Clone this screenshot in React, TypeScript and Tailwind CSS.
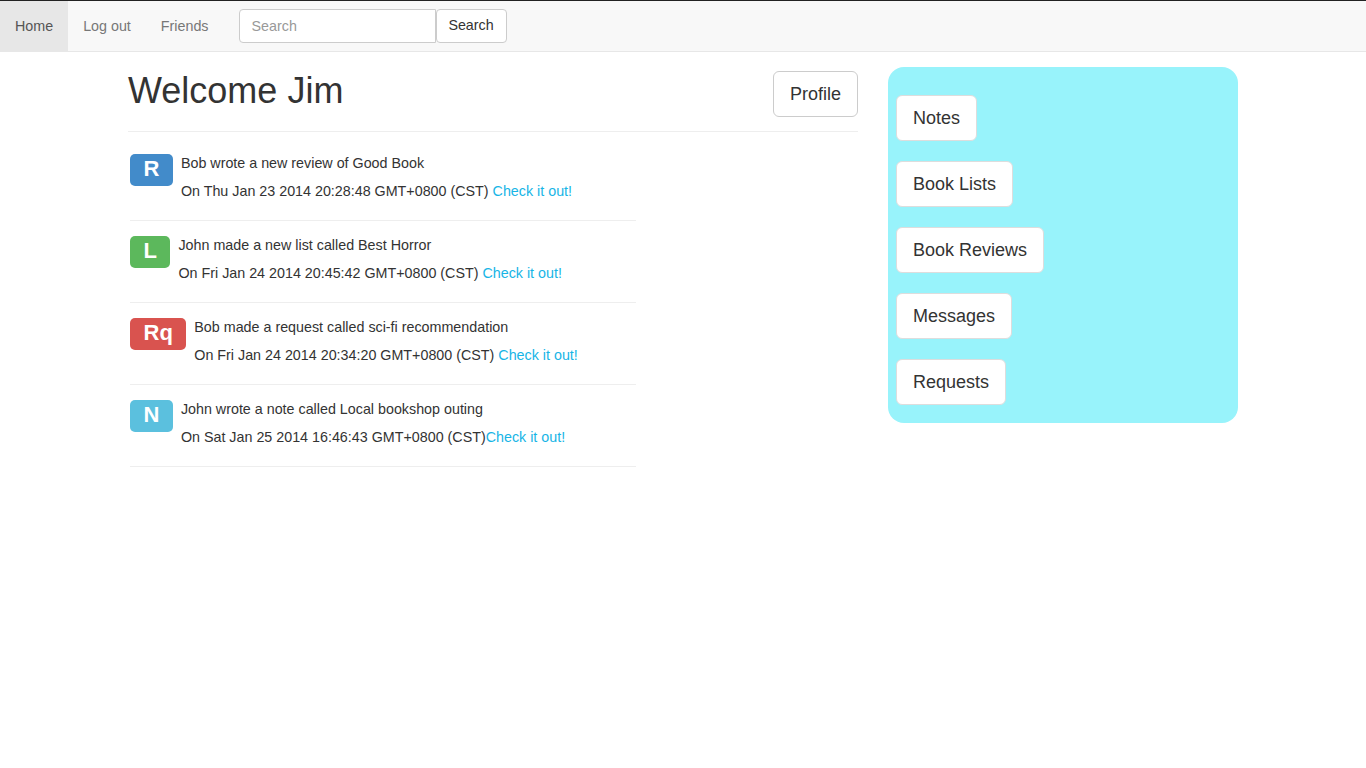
import React from 'react';

interface FeedItem {
  tag: string;
  tagColor: string;
  text: string;
  date: string;
  spaced: boolean;
}

const feed: FeedItem[] = [
  { tag: 'R', tagColor: 'bg-[#428bca]', text: 'Bob wrote a new review of Good Book', date: 'On Thu Jan 23 2014 20:28:48 GMT+0800 (CST)', spaced: true },
  { tag: 'L', tagColor: 'bg-[#5cb85c]', text: 'John made a new list called Best Horror', date: 'On Fri Jan 24 2014 20:45:42 GMT+0800 (CST)', spaced: true },
  { tag: 'Rq', tagColor: 'bg-[#d9534f]', text: 'Bob made a request called sci-fi recommendation', date: 'On Fri Jan 24 2014 20:34:20 GMT+0800 (CST)', spaced: true },
  { tag: 'N', tagColor: 'bg-[#5bc0de]', text: 'John wrote a note called Local bookshop outing', date: 'On Sat Jan 25 2014 16:46:43 GMT+0800 (CST)', spaced: false },
];

const sideLinks = ['Notes', 'Book Lists', 'Book Reviews', 'Messages', 'Requests'];

const font = { fontFamily: '"Liberation Sans", Arial, sans-serif' };

const App: React.FC = () => {
  return (
    <div className="min-h-screen bg-white text-[#333] text-[14.3px]" style={font}>
      {/* Navbar */}
      <nav className="flex h-[52px] items-stretch border-t border-t-[#222] border-b border-b-[#e7e7e7] bg-[#f8f8f8]">
        <a className="flex items-center bg-[#e7e7e7] px-[15px] pt-[1px] text-[#555]">Home</a>
        <a className="flex items-center px-[15px] pt-[1px] text-[#777]">Log out</a>
        <a className="flex items-center px-[15px] pt-[1px] text-[#777]">Friends</a>
        <div className="flex items-center px-[15px]">
          <input
            type="text"
            placeholder="Search"
            className="h-[34px] w-[197px] rounded-l-[4px] border border-[#ccc] bg-white px-3 text-[14.3px] text-[#555] placeholder:text-[#999] outline-none"
          />
          <button className="h-[34px] w-[71px] rounded-[4px] border border-[#ccc] bg-white text-[14.3px] text-[#333]">
            Search
          </button>
        </div>
      </nav>

      {/* Page */}
      <div className="mx-auto flex w-[1110px] gap-[30px]">
        {/* Main column */}
        <div className="w-[730px] pt-[19px]">
          <div className="flex items-start justify-between border-b border-[#eee] pb-[14px]">
            <h1 className="text-[36px] leading-[1.1] text-[#333]">Welcome Jim</h1>
            <button className="h-[46px] rounded-[6px] border border-[#ccc] bg-white px-[16px] text-[18px] text-[#333]">
              Profile
            </button>
          </div>

          <div className="ml-[2px] mt-[7px] w-[506px]">
            {feed.map((item) => (
              <div key={item.text} className="flex gap-[8px] border-b border-[#eee] pt-[14px] pb-[19px]">
                <div className="pt-[1px]">
                  <span
                    className={`inline-block rounded-[5px] ${item.tagColor} px-[13.5px] pt-[4px] pb-[6px] text-[22px] font-bold leading-[22px] text-white`}
                  >
                    {item.tag}
                  </span>
                </div>
                <div>
                  <div className="leading-[20px]">{item.text}</div>
                  <div className="mt-[8px] leading-[20px]">
                    {item.date}
                    {item.spaced ? ' ' : ''}
                    <a className="text-[#17b5e6]">Check it out!</a>
                  </div>
                </div>
              </div>
            ))}
          </div>
        </div>

        {/* Sidebar */}
        <div className="w-[350px] pt-[15px]">
          <div className="flex flex-col items-start gap-[20px] rounded-[16px] bg-[#98f3fb] pt-[28px] pb-[18px] pl-[8px]">
            {sideLinks.map((label) => (
              <button
                key={label}
                className="h-[46px] rounded-[6px] border border-[#ddd] bg-white px-[16px] text-[18px] text-[#333]"
              >
                {label}
              </button>
            ))}
          </div>
        </div>
      </div>
    </div>
  );
};

export default App;
